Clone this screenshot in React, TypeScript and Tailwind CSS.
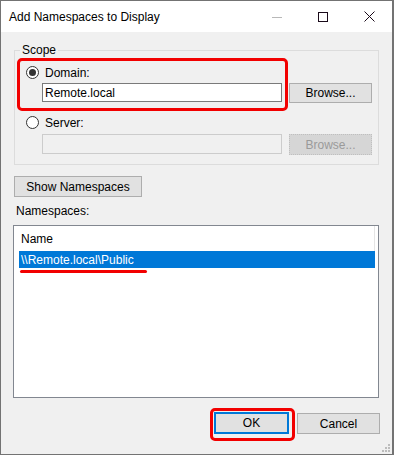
import React from "react";

function Radio({ checked }: { checked?: boolean }) {
  return (
    <div className="w-[13px] h-[13px] rounded-full border border-[#333333] bg-white flex items-center justify-center shrink-0">
      {checked && <div className="w-[7px] h-[7px] rounded-full bg-[#333333]" />}
    </div>
  );
}

export default function App() {
  return (
    <div
      className="relative w-[394px] h-[455px] border-l border-t border-b border-r-2 border-[#737373] bg-[#f0f0f0] flex flex-col text-[12px] text-black overflow-hidden"
      style={{ fontFamily: '"Liberation Sans", Arial, sans-serif' }}
    >
      {/* Title bar */}
      <div className="h-[31px] bg-white flex items-center justify-between shrink-0">
        <div className="pl-[8px] leading-none">Add Namespaces to Display</div>
        <div className="flex h-full">
          <div className="w-[46px] h-full flex items-center justify-center">
            <svg width="10" height="10" viewBox="0 0 10 10">
              <line x1="0" y1="5.5" x2="10" y2="5.5" stroke="#b8b8b8" strokeWidth="1" />
            </svg>
          </div>
          <div className="w-[46px] h-full flex items-center justify-center">
            <svg width="10" height="10" viewBox="0 0 10 10">
              <rect x="0.5" y="0.5" width="9" height="9" fill="none" stroke="#1a0a1a" strokeWidth="1" />
            </svg>
          </div>
          <div className="w-[46px] h-full flex items-center justify-center">
            <svg width="11" height="11" viewBox="0 0 11 11">
              <line x1="0.5" y1="0.5" x2="10.5" y2="10.5" stroke="#1a0a1a" strokeWidth="1" />
              <line x1="10.5" y1="0.5" x2="0.5" y2="10.5" stroke="#1a0a1a" strokeWidth="1" />
            </svg>
          </div>
        </div>
      </div>

      {/* Body */}
      <div className="relative flex-1 flex flex-col">
        {/* Scope group */}
        <div className="relative mt-[18px] ml-[13px] w-[365px] h-[115px] border border-[#dcdcdc] flex flex-col pt-[15px] pl-[11px]">
          <div className="absolute -top-[8px] left-[5px] bg-[#f0f0f0] px-[2px] leading-[14px]">Scope</div>
          <div className="flex items-center h-[13px]">
            <Radio checked />
            <span className="ml-[6px] leading-none">Domain:</span>
          </div>
          <div className="flex items-start mt-[4px] pl-[16px]">
            <div className="w-[240px] h-[19px] bg-white border border-[#7a7a7a] flex items-center pl-[2px] leading-none">
              Remote.local
            </div>
            <div className="ml-[7px] w-[83px] h-[20px] bg-[#e1e1e1] border border-[#adadad] flex items-center justify-center leading-none">
              Browse...
            </div>
          </div>
          <div className="flex items-center h-[13px] mt-[13px]">
            <Radio />
            <span className="ml-[6px] leading-none">Server:</span>
          </div>
          <div className="flex items-start mt-[5px] pl-[16px]">
            <div className="w-[240px] h-[20px] bg-[#f0f0f0] border border-[#cccccc]" />
            <div className="ml-[7px] w-[83px] h-[21px] bg-[#d6d6d6] border border-dotted border-[#bfbfbf] flex items-center justify-center leading-none text-[#9a9a9a]">
              Browse...
            </div>
          </div>
          {/* red annotation around Domain */}
          <div className="absolute left-[2px] top-[7px] w-[271px] h-[53px] border-[3px] border-[#f20000] rounded-[5px]" />
        </div>

        {/* Show Namespaces */}
        <div className="mt-[11px] ml-[13px] w-[128px] h-[21px] bg-[#e1e1e1] border border-[#adadad] flex items-center justify-center leading-none">
          Show Namespaces
        </div>

        <div className="mt-[6px] ml-[15px] h-[16px] leading-[16px]">Namespaces:</div>

        {/* List */}
        <div className="relative mt-[6px] ml-[12px] w-[366px] h-[173px] bg-white border border-[#828790] flex flex-col">
          <div className="relative h-[25px] flex items-center pl-[7px] leading-none">
            Name
            <div className="absolute right-[3px] top-0 h-[25px] w-px bg-[#e5e5e5]" />
          </div>
          <div className="ml-[5px] w-[356px] h-[17px] bg-[#0078d7] text-white flex items-center pl-[2px] leading-none">
            {"\\\\Remote.local\\Public"}
          </div>
          <div className="absolute left-[6px] top-[44px] w-[127px] h-[3px] rounded-full bg-[#f20000]" />
        </div>

        {/* Buttons */}
        <div className="mt-[14px] flex justify-end items-start pr-[12px]">
          <div className="relative w-[75px] h-[22px] bg-[#e1e1e1] border-2 border-[#0078d7] flex items-center justify-center leading-none">
            OK
            <div className="absolute -left-[6px] -top-[6px] w-[85px] h-[33px] border-[3px] border-[#f20000] rounded-[5px]" />
          </div>
          <div className="ml-[8px] mt-[1px] w-[83px] h-[21px] bg-[#e1e1e1] border border-[#adadad] flex items-center justify-center leading-none">
            Cancel
          </div>
        </div>

        {/* Resize grip */}
        <svg className="absolute right-[2px] bottom-[2px]" width="9" height="9" viewBox="0 0 9 9">
          <rect x="7" y="1" width="2" height="2" fill="#bcbcbc" />
          <rect x="4" y="4" width="2" height="2" fill="#bcbcbc" />
          <rect x="7" y="4" width="2" height="2" fill="#bcbcbc" />
          <rect x="1" y="7" width="2" height="2" fill="#bcbcbc" />
          <rect x="4" y="7" width="2" height="2" fill="#bcbcbc" />
          <rect x="7" y="7" width="2" height="2" fill="#bcbcbc" />
        </svg>
      </div>
    </div>
  );
}
